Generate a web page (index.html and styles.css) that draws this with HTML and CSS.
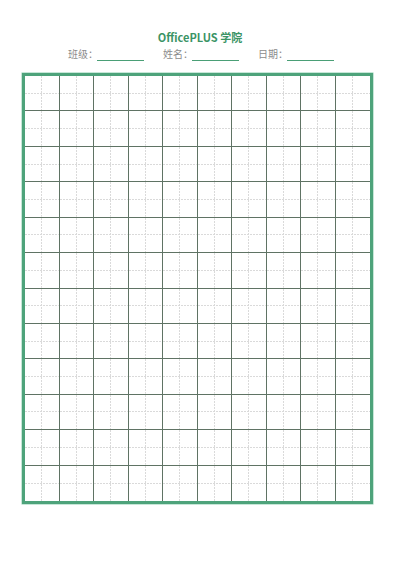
FILE: index.html
```html
<!DOCTYPE html>
<html lang="zh">
<head>
<meta charset="utf-8">
<link rel="stylesheet" href="styles.css">
</head>
<body>
<div class="page">
  <h1 class="title">OfficePLUS 学院</h1>
  <div class="info">
    <div class="field"><span class="label">班级：</span><span class="blank"></span></div>
    <div class="field"><span class="label">姓名：</span><span class="blank"></span></div>
    <div class="field"><span class="label">日期：</span><span class="blank"></span></div>
  </div>
  <div class="frame">
    <div class="grid">
      <i></i><i></i><i></i><i></i><i></i><i></i><i></i><i></i><i></i><i></i>
      <i></i><i></i><i></i><i></i><i></i><i></i><i></i><i></i><i></i><i></i>
      <i></i><i></i><i></i><i></i><i></i><i></i><i></i><i></i><i></i><i></i>
      <i></i><i></i><i></i><i></i><i></i><i></i><i></i><i></i><i></i><i></i>
      <i></i><i></i><i></i><i></i><i></i><i></i><i></i><i></i><i></i><i></i>
      <i></i><i></i><i></i><i></i><i></i><i></i><i></i><i></i><i></i><i></i>
      <i></i><i></i><i></i><i></i><i></i><i></i><i></i><i></i><i></i><i></i>
      <i></i><i></i><i></i><i></i><i></i><i></i><i></i><i></i><i></i><i></i>
      <i></i><i></i><i></i><i></i><i></i><i></i><i></i><i></i><i></i><i></i>
      <i></i><i></i><i></i><i></i><i></i><i></i><i></i><i></i><i></i><i></i>
      <i></i><i></i><i></i><i></i><i></i><i></i><i></i><i></i><i></i><i></i>
      <i></i><i></i><i></i><i></i><i></i><i></i><i></i><i></i><i></i><i></i>
    </div>
  </div>
</div>
</body>
</html>
```
FILE: styles.css
```css
* { box-sizing: border-box; }
html, body { margin: 0; padding: 0; background: #fff; }
body { font-family: "Noto Sans CJK SC", "Noto Sans", sans-serif; width: 400px; height: 566px; overflow: hidden; }
.page { padding-top: 29px; }
.title {
  margin: 0;
  text-align: center;
  font-size: 11px;
  line-height: 16px;
  font-weight: 700;
  color: #3b9466;
}
.info {
  display: flex;
  gap: 19px;
  padding-left: 68px;
  margin-top: 2px;
  height: 26px;
}
.field { display: flex; align-items: flex-start; flex-shrink: 0; }
.label {
  font-size: 10px;
  line-height: 14px;
  color: #8c8c8c;
  white-space: nowrap;
  width: 29px;
  flex-shrink: 0;
}
.blank {
  display: block;
  width: 47px;
  height: 14px;
  border-bottom: 1px solid #4a9f76;
}
.frame {
  margin-left: 22px;
  width: 351px;
  height: 431px;
  border: 3px solid #4ea37b;
  box-shadow: 0 0 0 0.5px #8fcfb0;
}
.grid {
  width: 345px;
  height: 425px;
  display: grid;
  grid-template-columns: repeat(10, 1fr);
  grid-template-rows: repeat(12, 1fr);
}
.grid i {
  border-right: 1px solid #5f7364;
  border-bottom: 1px solid #5f7364;
  background:
    repeating-linear-gradient(to bottom, #dadada 0 2px, transparent 2px 3px) center / 1px 100% no-repeat,
    repeating-linear-gradient(to right, #dadada 0 2px, transparent 2px 3px) center / 100% 1px no-repeat;
}
.grid i:nth-child(10n) { border-right: none; }
.grid i:nth-child(n+111) { border-bottom: none; }
```
